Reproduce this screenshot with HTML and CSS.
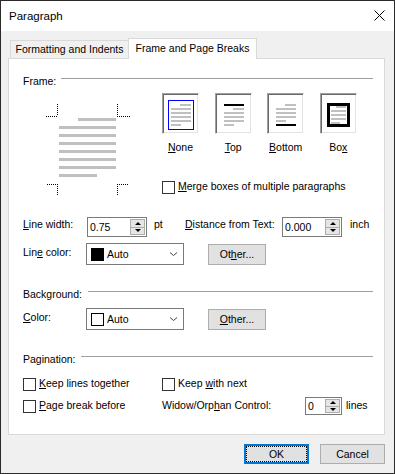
FILE: index.html
```html
<!DOCTYPE html>
<html lang="en">
<head>
  <meta charset="UTF-8" />
  <title>Paragraph</title>
  <link rel="stylesheet" href="styles.css">
</head>
<body>
  <div class="dialog">
    <div class="titlebar">
      <span class="title">Paragraph</span>
      <svg class="close" width="11" height="11" viewBox="0 0 11 11"><path d="M0.5 0.5L10.5 10.5M10.5 0.5L0.5 10.5" stroke="#000" fill="none"/></svg>
    </div>

    <div class="content">
      <div class="tabs">
        <div class="tab">Formatting and Indents</div>
        <div class="tab active">Frame and Page Breaks</div>
      </div>

      <div class="panel">
        <div class="group-head"><span>Frame:</span><div class="rule"></div></div>

        <div class="frame-body">
          <svg class="preview" width="84" height="92" viewBox="0 0 84 92" shape-rendering="crispEdges">
            <g stroke="#000" stroke-dasharray="1 1" fill="none">
              <path d="M0 12.5H12M11.5 0V12"/>
              <path d="M71.5 0V12M71 12.5H84"/>
              <path d="M1 80.5H12M11.5 80V92"/>
              <path d="M71.5 80V92M71 80.5H83"/>
            </g>
            <g fill="#c0c0c0">
              <rect x="32" y="14" width="38" height="3"/>
              <rect x="13" y="22" width="57" height="3"/>
              <rect x="13" y="30" width="57" height="3"/>
              <rect x="13" y="38" width="57" height="3"/>
              <rect x="13" y="46" width="57" height="3"/>
              <rect x="13" y="54" width="57" height="3"/>
              <rect x="13" y="62" width="57" height="3"/>
              <rect x="13" y="70" width="38" height="3"/>
            </g>
          </svg>

          <div class="frame-side">
            <div class="borders">
              <div class="border-opt">
                <div class="icon-btn">
                  <svg width="35" height="39" viewBox="0 0 35 39" shape-rendering="crispEdges">
                    <rect x="5.5" y="6.5" width="25" height="29" fill="none" stroke="#0000ff"/>
                    <g fill="#c0c0c0">
                      <rect x="17" y="10" width="11" height="2"/>
                      <rect x="8" y="14" width="20" height="2"/>
                      <rect x="8" y="18" width="20" height="2"/>
                      <rect x="8" y="22" width="20" height="2"/>
                      <rect x="8" y="26" width="20" height="2"/>
                      <rect x="8" y="30" width="10" height="2"/>
                    </g>
                  </svg>
                </div>
                <span class="opt-label"><u>N</u>one</span>
              </div>
              <div class="border-opt">
                <div class="icon-btn">
                  <svg width="35" height="39" viewBox="0 0 35 39" shape-rendering="crispEdges">
                    <rect x="8" y="10" width="20" height="2" fill="#000"/>
                    <g fill="#c0c0c0">
                      <rect x="17" y="14" width="11" height="2"/>
                      <rect x="8" y="18" width="20" height="2"/>
                      <rect x="8" y="22" width="20" height="2"/>
                      <rect x="8" y="26" width="20" height="2"/>
                      <rect x="8" y="30" width="10" height="2"/>
                    </g>
                  </svg>
                </div>
                <span class="opt-label"><u>T</u>op</span>
              </div>
              <div class="border-opt">
                <div class="icon-btn">
                  <svg width="35" height="39" viewBox="0 0 35 39" shape-rendering="crispEdges">
                    <g fill="#c0c0c0">
                      <rect x="17" y="10" width="11" height="2"/>
                      <rect x="8" y="14" width="20" height="2"/>
                      <rect x="8" y="18" width="20" height="2"/>
                      <rect x="8" y="22" width="20" height="2"/>
                      <rect x="8" y="26" width="10" height="2"/>
                    </g>
                    <rect x="8" y="30" width="20" height="2" fill="#000"/>
                  </svg>
                </div>
                <span class="opt-label"><u>B</u>ottom</span>
              </div>
              <div class="border-opt">
                <div class="icon-btn">
                  <svg width="35" height="39" viewBox="0 0 35 39" shape-rendering="crispEdges">
                    <rect x="7.5" y="10.5" width="20" height="21" fill="none" stroke="#000" stroke-width="3"/>
                    <g fill="#c0c0c0">
                      <rect x="15" y="12" width="10" height="2"/>
                      <rect x="10" y="16" width="15" height="2"/>
                      <rect x="10" y="20" width="15" height="2"/>
                      <rect x="10" y="24" width="15" height="2"/>
                      <rect x="10" y="28" width="9" height="2"/>
                    </g>
                  </svg>
                </div>
                <span class="opt-label">Bo<u>x</u></span>
              </div>
            </div>

            <div class="check-row merge">
              <span class="check"></span>
              <span><u>M</u>erge boxes of multiple paragraphs</span>
            </div>
          </div>
        </div>

        <div class="row row-width">
          <span class="lbl lbl-width"><u>L</u>ine width:</span>
          <div class="spin spin-wide">
            <span class="spin-val">0.75</span>
            <div class="spin-btns"><span class="up"></span><span class="down"></span></div>
          </div>
          <span class="lbl unit-pt">pt</span>
          <span class="lbl lbl-dist"><u>D</u>istance from Text:</span>
          <div class="spin spin-wide">
            <span class="spin-val">0.000</span>
            <div class="spin-btns"><span class="up"></span><span class="down"></span></div>
          </div>
          <span class="lbl unit-inch">inch</span>
        </div>

        <div class="row row-color">
          <span class="lbl lbl-color">Lin<u>e</u> color:</span>
          <div class="select">
            <span class="swatch swatch-black"></span>
            <span class="select-val">Auto</span>
            <svg width="7" height="4" viewBox="0 0 7 4"><path d="M0 0.5L3.5 3.5L7 0.5" stroke="#444" fill="none"/></svg>
          </div>
          <div class="other-btn">Ot<u>h</u>er...</div>
        </div>

        <div class="group-head head-bg"><span>Background:</span><div class="rule"></div></div>

        <div class="row row-bgcolor">
          <span class="lbl lbl-color"><u>C</u>olor:</span>
          <div class="select">
            <span class="swatch"></span>
            <span class="select-val">Auto</span>
            <svg width="7" height="4" viewBox="0 0 7 4"><path d="M0 0.5L3.5 3.5L7 0.5" stroke="#444" fill="none"/></svg>
          </div>
          <div class="other-btn"><u>O</u>ther...</div>
        </div>

        <div class="group-head head-pag"><span>Pagination:</span><div class="rule"></div></div>

        <div class="row row-keep">
          <div class="check-row cell-first">
            <span class="check"></span>
            <span><u>K</u>eep lines together</span>
          </div>
          <div class="check-row">
            <span class="check"></span>
            <span>Keep <u>w</u>ith next</span>
          </div>
        </div>

        <div class="row row-break">
          <div class="check-row cell-first pad2">
            <span class="check"></span>
            <span><u>P</u>age break before</span>
          </div>
          <span class="lbl lbl-widow pad2">Widow/Orp<u>h</u>an Control:</span>
          <div class="spin spin-small">
            <span class="spin-val">0</span>
            <div class="spin-btns"><span class="up"></span><span class="down"></span></div>
          </div>
          <span class="lbl unit-lines pad2">lines</span>
        </div>
      </div>

      <div class="actions">
        <button class="btn default">OK</button>
        <button class="btn">Cancel</button>
      </div>
    </div>
  </div>
</body>
</html>
```

FILE: styles.css
```css
body {
  margin: 0;
  font-family: "Liberation Sans", Arial, sans-serif;
  font-size: 10.5px;
  color: #000;
  background: #fff;
}
.dialog {
  width: 395px;
  height: 474px;
  box-sizing: border-box;
  border: 1px solid #2b2b2b;
  background: #f0f0f0;
}
.titlebar {
  height: 30px;
  background: #fff;
  display: flex;
  justify-content: space-between;
  align-items: flex-start;
}
.title {
  padding-left: 8px;
  line-height: 30px;
  font-size: 11.5px;
}
.close {
  margin: 9px 9px 0 0;
}
.content {
  padding: 7px 9px 0 7px;
}

/* tabs */
.tabs {
  display: flex;
  align-items: flex-end;
  padding-left: 2px;
}
.tab {
  box-sizing: border-box;
  width: 118px;
  height: 18px;
  line-height: 17px;
  border: 1px solid #d9d9d9;
  border-bottom: none;
  border-right: none;
  text-align: center;
}
.tab.active {
  width: 129px;
  height: 21px;
  line-height: 18px;
  border-right: 1px solid #d9d9d9;
  background: #fff;
  margin-bottom: -1px;
  position: relative;
}
.panel {
  box-sizing: border-box;
  height: 377px;
  border: 1px solid #d9d9d9;
  background: #fff;
  padding: 16px 11px 0 14px;
  line-height: 13px;
}

/* group headings with rule */
.group-head {
  display: flex;
  align-items: flex-start;
}
.rule {
  flex: 1;
  height: 1px;
  background: #a0a0a0;
  margin: 3px 0 0 5px;
}
.head-bg {
  margin-top: 23px;
}
.head-bg .rule {
  margin-left: 6px;
}
.head-pag {
  margin-top: 23px;
}

/* frame block */
.frame-body {
  display: flex;
  align-items: flex-start;
  margin-top: 5px;
}
.preview {
  flex: none;
  margin: 11px 0 0 23px;
}
.frame-side {
  margin-left: 32px;
}
.borders {
  display: grid;
  grid-template-columns: repeat(4, 37px);
  column-gap: 15.6px;
}
.border-opt {
  display: flex;
  flex-direction: column;
  align-items: center;
}
.icon-btn {
  box-sizing: border-box;
  width: 37px;
  height: 41px;
  border: 1px solid;
  border-color: #a0a0a0 #fff #fff #a0a0a0;
  box-shadow: inset 1px 1px 0 #696969, inset -1px -1px 0 #e3e3e3;
}
.icon-btn svg {
  display: block;
}
.opt-label {
  margin-top: 7px;
}

/* checkboxes */
.check-row {
  display: flex;
  align-items: flex-start;
}
.check {
  flex: none;
  box-sizing: border-box;
  width: 13px;
  height: 13px;
  margin: 1px 3px 0 0;
  border: 1px solid #333;
  background: #fff;
}
.merge {
  margin-top: 26px;
}

/* rows */
.row {
  display: flex;
  align-items: flex-start;
}
.row-width {
  margin-top: 21px;
}
.row-width .lbl {
  padding-top: 1px;
}
.lbl-width {
  width: 64px;
}
.unit-pt {
  width: 24px;
  margin-left: 7px;
  margin-right: 7px;
}
.lbl-dist {
  width: 97px;
}
.unit-inch {
  margin-left: 8px;
}

.spin {
  box-sizing: border-box;
  height: 20px;
  border: 1px solid #7a7a7a;
  background: #fff;
  display: flex;
}
.spin-wide {
  width: 60px;
}
.spin-small {
  width: 37px;
  height: 18px;
}
.spin-val {
  flex: 1;
  padding-left: 2px;
  line-height: 18px;
}
.spin-small .spin-val {
  line-height: 16px;
}
.spin-btns {
  box-sizing: border-box;
  width: 15px;
  margin: 1px;
  border: 1px solid #adadad;
  display: flex;
  flex-direction: column;
}
.spin-btns span {
  flex: 1;
  display: flex;
  align-items: center;
  justify-content: center;
  background: #e5e5e5;
}
.spin-btns span + span {
  border-top: 1px solid #adadad;
}
.spin-btns span::after {
  content: "";
  border-left: 3px solid transparent;
  border-right: 3px solid transparent;
}
.spin-btns .up::after {
  border-bottom: 3px solid #000;
}
.spin-btns .down::after {
  border-top: 3px solid #000;
}

.row-color {
  margin-top: 6px;
}
.row-bgcolor {
  margin-top: 7px;
}
.lbl-color {
  width: 63px;
  padding-top: 3px;
}
.select {
  box-sizing: border-box;
  width: 98px;
  height: 22px;
  border: 1px solid #7a7a7a;
  background: #fff;
  display: flex;
  align-items: center;
  padding: 0 6px 0 4px;
  line-height: 20px;
}
.swatch {
  box-sizing: border-box;
  width: 13px;
  height: 13px;
  border: 1px solid #000;
  margin-right: 3px;
}
.swatch-black {
  background: #000;
}
.select-val {
  flex: 1;
}
.other-btn {
  box-sizing: border-box;
  width: 58px;
  height: 21px;
  margin: 1px 0 0 24px;
  border: 1px solid #adadad;
  background: #e1e1e1;
  line-height: 19px;
  text-align: center;
}

/* pagination */
.row-keep {
  margin-top: 11px;
}
.row-break {
  margin-top: 6px;
}
.cell-first {
  width: 139px;
}
.pad2 {
  padding-top: 2px;
}
.lbl-widow {
  width: 143px;
}
.unit-lines {
  margin-left: 4px;
}

/* bottom buttons */
.actions {
  display: flex;
  justify-content: flex-end;
  gap: 11px;
  margin-top: 9px;
}
.btn {
  box-sizing: border-box;
  width: 65px;
  height: 20px;
  padding: 0;
  font: inherit;
  color: #000;
  line-height: 18px;
  border: 1px solid #adadad;
  background: #e1e1e1;
}
.btn.default {
  border-color: #0078d7;
  box-shadow: inset 0 0 0 1px #0078d7;
  outline: 1px dotted #000;
  outline-offset: -3px;
}
```
